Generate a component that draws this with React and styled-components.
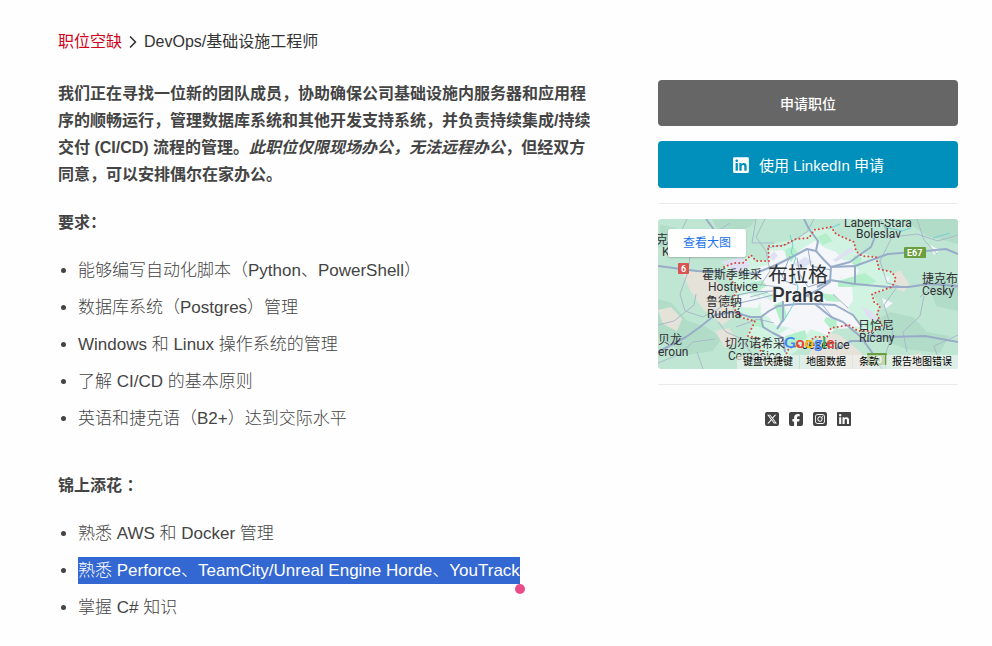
import React from 'react';
import styled, { createGlobalStyle } from 'styled-components';
import { ChevronRight } from 'lucide-react';
import {
    FaLinkedin,
    FaSquareFacebook,
    FaSquareInstagram,
    FaSquareXTwitter,
} from 'react-icons/fa6';

const GlobalStyle = createGlobalStyle`
    * {
        box-sizing: border-box;
    }
    body {
        margin: 0;
        background: #fefefe;
        color: #444;
        font-family: 'Liberation Sans', 'Noto Sans CJK SC', sans-serif;
        font-size: 16px;
        line-height: 27px;
    }
`;

const Page = styled.main`
    padding: 28px 34px 24px 58px;
`;

const Breadcrumb = styled.nav`
    display: flex;
    align-items: center;
    gap: 1px;
    margin-bottom: 25px;
    color: #333;
`;

const BreadcrumbLink = styled.a`
    color: #d0021b;
    text-decoration: none;
`;

const Columns = styled.div`
    display: grid;
    grid-template-columns: 1fr 300px;
    align-items: start;
    gap: 60px;
`;

const Intro = styled.p`
    margin: 0;
    font-weight: bold;
`;

const SectionTitle = styled.h2`
    margin: ${(props) => (props.$spaced ? '40px' : '21px')} 0 21px;
    font-size: 16px;
    line-height: 27px;
    font-weight: bold;
`;

const List = styled.ul`
    display: flex;
    flex-direction: column;
    gap: 10px;
    margin: 0;
    padding-left: 20px;
    font-size: 17px;
    font-weight: 300;
`;

const Selected = styled.span`
    position: relative;
    display: inline-block;
    background: #3367d1;
    color: #fff;
`;

const Handle = styled.span`
    position: absolute;
    right: -5px;
    bottom: -10px;
    width: 10px;
    height: 10px;
    border-radius: 50%;
    background: #ea4c89;
`;

const Sidebar = styled.aside`
    display: flex;
    flex-direction: column;
    gap: 15px;
`;

const ApplyButton = styled.button`
    display: flex;
    align-items: center;
    justify-content: center;
    gap: 9px;
    min-height: ${(props) => (props.$linkedin ? '47px' : '46px')};
    border: 0;
    border-radius: 4px;
    background: ${(props) => (props.$linkedin ? '#0090bb' : '#666')};
    color: #fff;
    font-family: inherit;
    font-size: ${(props) => (props.$linkedin ? '15px' : '14px')};
    font-weight: ${(props) => (props.$linkedin ? 400 : 500)};
    cursor: pointer;
`;

const Divider = styled.hr`
    width: 100%;
    margin: 0;
    border: 0;
    border-top: 1px solid #e9e9e9;
`;

const MapFrame = styled.div`
    position: relative;
    overflow: hidden;
    border-radius: 4px;
    background: #bfe6d3;
`;

const MapDrawing = styled.svg`
    display: block;
    width: 100%;
    font-family: Roboto, 'Noto Sans CJK SC', sans-serif;
    font-size: 12px;
`;

const LargerMapLink = styled.a`
    position: absolute;
    top: 10px;
    left: 10px;
    padding: 0 15px;
    border-radius: 2px;
    background: #fff;
    box-shadow: 0 1px 2px rgba(0, 0, 0, 0.2);
    color: #1a73e8;
    font-size: 12px;
    line-height: 28px;
    text-decoration: none;
`;

const MapFooter = styled.div`
    position: absolute;
    right: 0;
    bottom: 0;
    display: flex;
    gap: 1px;
`;

const MapFooterLink = styled.a`
    padding: 0 6px;
    background: rgba(240, 242, 240, 0.65);
    color: #000;
    font-size: 10px;
    line-height: 14px;
    text-decoration: none;
`;

const Social = styled.div`
    display: flex;
    justify-content: center;
    gap: 8px;
    padding-top: 11px;
`;

const SocialLink = styled.a`
    display: flex;
    color: #444;
    font-size: 16px;
`;

const requirements = [
    '能够编写自动化脚本（Python、PowerShell）',
    '数据库系统（Postgres）管理',
    'Windows 和 Linux 操作系统的管理',
    '了解 CI/CD 的基本原则',
    '英语和捷克语（B2+）达到交际水平',
];

const niceToHave = [
    { text: '熟悉 AWS 和 Docker 管理' },
    { text: '熟悉 Perforce、TeamCity/Unreal Engine Horde、YouTrack', selected: true },
    { text: '掌握 C# 知识' },
];

const socialLinks = [
    { name: 'X', icon: FaSquareXTwitter },
    { name: 'Facebook', icon: FaSquareFacebook },
    { name: 'Instagram', icon: FaSquareInstagram },
    { name: 'LinkedIn', icon: FaLinkedin },
];

const mapLabels = [
    { x: -2, y: 25, text: '克' },
    { x: 4, y: 37, text: 'K' },
    { x: 44, y: 60, text: '霍斯季维采' },
    { x: 50, y: 72, text: 'Hostivice' },
    { x: 48, y: 87, text: '鲁德纳' },
    { x: 49, y: 99, text: 'Rudná' },
    { x: 186, y: 8, text: 'Labem-Stará' },
    { x: 198, y: 19, text: 'Boleslav' },
    { x: 264, y: 64, text: '捷克布' },
    { x: 264, y: 76, text: 'Český' },
    { x: 200, y: 111, text: '日恰尼' },
    { x: 201, y: 123, text: 'Říčany' },
    { x: 0, y: 125, text: '贝龙' },
    { x: 0, y: 137, text: 'eroun' },
    { x: 67, y: 129, text: '切尔诺希采' },
    { x: 70, y: 141, text: 'Černošice' },
    { x: 144, y: 130, text: 'Jesenice' },
];

const PragueMap = () => (
    <MapDrawing viewBox="0 0 300 150" role="img" aria-label="布拉格 Praha">
        <rect width="300" height="150" fill="#bfe6d3" />

        {/* fields and forest */}
        <g fill="#b1dcc8">
            <path d="M54 0h44l-6 8-18 7-14-4zM0 80l14 4 14 17 20 7 16 11-9 13-25 4-30-18z" />
            <path d="M212 105l20-12 23 5 14 15 22 4-9 17-34-4-24-9zM245 0h55v25l-31-8z" />
            <path d="M269 62l18-6 13 8v28l-22-5zM2 5l18 5 8 16-28 2z" />
        </g>
        <g fill="#e5e3d9">
            <path d="M24 53l22-1 20 17 11 27-12 10-20-16-12-17zM0 91l13-3 11 12-5 12-14-7z" />
            <path d="M164 113l18 3 21 17 10 17h-48l-15-13z" />
            <path d="M57 112l14-3 10 14-14 6zM234 56l8-5 9 14-5 8-7-3zM247 138l15-4 8 16h-26z" />
        </g>

        {/* built-up area inside the city limits */}
        <path
            fill="#d0f4e1"
            d="M66 48l27-12 4 6 14 0 0-16 27-6 18-10 17-2 5 7 18 8 2 9 20 6 3 12 13 3 4 7-4 8-20 7 8 12-3 8 5 14-23 4-10-6-18 3-4 9-13 0-33 24-20 2-3-26-11-2 7-15-12-3-11-17 6-13z"
        />
        <g fill="#f4f6fa">
            <path d="M98 49l12-3 2-14 12-1 10 7 14-11 9-5 10 7 11 4 13 16-9 10 12 6 1 17-10 13 14 6-5 8-16 1-9 6-16-6-8 8-13-9-18-4-5-17 8-12-12-4-8-9z" />
            <path d="M174 40l19 2 8 10-11 14-10-11zM168 85l22 5 13 18-16-1-13-11zM102 75l16 10 1 17-16-7z" />
            <path d="M76 78l15-3 13 5-5 9-17-1zM136 88l17-2 12 16-10 9-12-8zM119 117l12-8 10 7-16 10zM224 79l11 5-8 6zM272 26l10 5-6 5zM225 56l7 3-3 6z" />
        </g>
        <g fill="#dfe1f2">
            <path d="M63 43l20-5 10 9-14 7zM175 41l18-13 3 4-18 11zM203 87l12 6 5 9-10-3z" />
            <path d="M136 45l11-7 8 5-13 8zM111 38l5-6 4 5-5 5z" />
        </g>
        <g fill="#b4efcb">
            <path d="M91 64l13-3 5 6-10 5zM127 31l8-4 5 7-7 9-5-5zM159 18l9-4 7 8-10 4zM180 62l27-8 12 9-23 5-16 0z" />
            <path d="M116 86l9-4 4 15-6 7zM127 117l20-6 2 8-14 9-9-3zM168 98l10 3 2 10-8-2-6-7zM91 96l12 5 5 9-13-4z" />
            <path d="M204 105l14-4 4 6-9 4zM196 36l8 3-3 9-7-3zM163 74l14 2 5 7-14-1z" />
        </g>

        {/* minor roads */}
        <g fill="none" stroke="#a9b9cb" strokeWidth="1">
            <path d="M29 0l-6 13 11 8 24-8 14-9M34 22l-4 31-8 22 5 17 18 6 19-10M0 106l16-4 20-16 2-11M98 0l-4 24 22 0" />
            <path d="M107 0l-9 18 10 14 4 20-10 15M156 0l-7 13-19 12-21 4M78 108l22-8 16 4M60 103l8 10 14 6 15 20" />
            <path d="M222 0l11 20-11 22 7 22 16 4M300 16l-20 6-21-7-25 3M262 78l17-14 21 5M266 77l-4 20-17 16 4 20M239 68l-13 18 9 28-9 25" />
            <path d="M0 144l22-9 13-12 22-3M45 150l-6-17M284 150l-8-23 24-11M279 35l-13-14-7-21" />
            <path d="M77 70l19-5 26 3M92 78l18-5M145 75l18 9 12 15M175 75l15 14" />
        </g>

        {/* highways */}
        <g fill="none" stroke="#98acc9" strokeWidth="2" strokeLinejoin="round">
            <path d="M0 47l39 5 27 1M197 47l33-12 38-3 20-2 12 5" />
            <path d="M48 0l9 12 18 9M218 15l-5 13-13 9-8 6-19 5" />
            <path d="M146 0l5 10 9 12-2 10 8 9 7 7-1 15-12 8-14 7" />
            <path d="M0 133l28-15 14-10 15-12 19-3 16 5 11 0 8-6 9-5 19-2 18 0 16 13 12 5 18 15 10 14 11 18" />
            <path d="M103 98l2 10 10 6 10 5 2 14" />
            <path d="M158 32l-9-2-15 8-16 8-20 8-16 1" />
            <path d="M173 48l24-1 0 18-25-4-13 7M197 65l33 3 20 0 21-3 29 2" />
            <path d="M157 85l20 1 18 10 9 12M210 116l22 2 35-1 33 6M119 110l6-9 0-19M213 122l-20 0-15 8" />
            <path d="M77 85l18-4 20-5M70 78l24-5 21-1" strokeWidth="1" />
            <path strokeWidth="1" d="M118 46l9 16 11 4M124 57l8-20M139 39l3 17 8 12 22-7M150 30l3 17 20 4" />
        </g>
        <path
            fill="none"
            stroke="#72ced9"
            strokeWidth="1"
            d="M132 16l3 10-2 8 5 4-4 12 6 19-5 17-10 17M170 10l12-5M226 8l18 4 9-3M275 19l17-5"
        />

        {/* city border */}
        <path
            fill="none"
            stroke="#dc423b"
            strokeWidth="2"
            strokeLinecap="round"
            strokeDasharray="0 4"
            d="M66 48l10-4 9 0 8-8 5 6 13 0-1-15 14 0 14-7 13-1 5-8 17-3 5 7 18 8 2 9 6 5 14 1 3 12 13 3 4 7-4 8-20 7 2 8 6 4-3 8 5 12-10 5-14 0-9-6-18 3-4 9-13 0-5 6-20 5-7 15-20 1-3-26-11-2 7-15-12-3-8-8-3-9 6-13-13-14"
        />

        <rect x="20" y="44" width="11" height="11" rx="1" fill="#d9534f" />
        <text x="23" y="53" fill="#fff" fontSize="9" fontWeight="bold">6</text>
        <rect x="246" y="28" width="22" height="11" rx="1" fill="#6b9e3f" />
        <text x="249" y="37" fill="#fff" fontSize="9" fontWeight="bold">E67</text>
        <rect x="209" y="134" width="20" height="12" rx="1" fill="#6b9e3f" />
        <text x="213" y="144" fill="#fff" fontSize="9" fontWeight="bold">D0</text>

        <g fill="#303134">
            {mapLabels.map((label) => (
                <text key={label.text} x={label.x} y={label.y}>{label.text}</text>
            ))}
            <text x="110" y="63" fontSize="20">布拉格</text>
            <text x="114" y="83" fontSize="20" fontWeight="500">Praha</text>
        </g>

        <text
            x="126"
            y="129"
            fontFamily="Lato, sans-serif"
            fontSize="16"
            fontWeight="bold"
        >
            <tspan fill="#4285f4">G</tspan>
            <tspan fill="#ea4335">o</tspan>
            <tspan fill="#fbbc04">o</tspan>
            <tspan fill="#4285f4">g</tspan>
            <tspan fill="#34a853">l</tspan>
            <tspan fill="#ea4335">e</tspan>
        </text>
    </MapDrawing>
);

const App = () => (
    <>
        <GlobalStyle />
        <Page lang="zh-CN">
            <Breadcrumb>
                <BreadcrumbLink href="#jobs">职位空缺</BreadcrumbLink>
                <ChevronRight size={20} aria-hidden="true" />
                <span>DevOps/基础设施工程师</span>
            </Breadcrumb>
            <Columns>
                <article>
                    <Intro>
                        我们正在寻找一位新的团队成员，协助确保公司基础设施内服务器和应用程序的顺畅运行，管理数据库系统和其他开发支持系统，并负责持续集成/持续交付 (CI/CD) 流程的管理。
                        <em>此职位仅限现场办公，无法远程办公</em>
                        ，但经双方同意，可以安排偶尔在家办公。
                    </Intro>
                    <SectionTitle>要求：</SectionTitle>
                    <List>
                        {requirements.map((item) => (
                            <li key={item}>{item}</li>
                        ))}
                    </List>
                    <SectionTitle $spaced>锦上添花 ：</SectionTitle>
                    <List>
                        {niceToHave.map((item) => (
                            <li key={item.text}>
                                {item.selected ? (
                                    <Selected>
                                        {item.text}
                                        <Handle />
                                    </Selected>
                                ) : (
                                    item.text
                                )}
                            </li>
                        ))}
                    </List>
                </article>
                <Sidebar>
                    <ApplyButton type="button">申请职位</ApplyButton>
                    <ApplyButton type="button" $linkedin>
                        <FaLinkedin size={18} aria-hidden="true" />
                        使用 LinkedIn 申请
                    </ApplyButton>
                    <Divider />
                    <MapFrame>
                        <PragueMap />
                        <LargerMapLink href="#map">查看大图</LargerMapLink>
                        <MapFooter>
                            <MapFooterLink href="#shortcuts">键盘快捷键</MapFooterLink>
                            <MapFooterLink href="#data">地图数据</MapFooterLink>
                            <MapFooterLink href="#terms">条款</MapFooterLink>
                            <MapFooterLink href="#report">报告地图错误</MapFooterLink>
                        </MapFooter>
                    </MapFrame>
                    <Divider />
                    <Social>
                        {socialLinks.map(({ name, icon: Icon }) => (
                            <SocialLink key={name} href="#share" aria-label={name}>
                                <Icon />
                            </SocialLink>
                        ))}
                    </Social>
                </Sidebar>
            </Columns>
        </Page>
    </>
);

export default App;
